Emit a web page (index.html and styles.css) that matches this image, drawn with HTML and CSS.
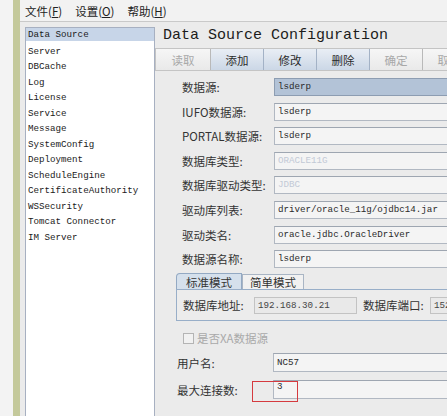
FILE: index.html
```html
<!DOCTYPE html>
<html lang="zh">
<head>
<meta charset="utf-8">
<title>Data Source Configuration</title>
<link rel="stylesheet" href="styles.css">
</head>
<body>
<div class="app">
  <div class="edge"></div>
  <div class="stripe"></div>
  <div class="main">
    <div class="menubar">
      <span class="menu">文件(<u>F</u>)</span>
      <span class="menu">设置(<u>O</u>)</span>
      <span class="menu">帮助(<u>H</u>)</span>
    </div>
    <div class="work">
      <ul class="nav">
        <li class="sel">Data Source</li>
        <li>Server</li>
        <li>DBCache</li>
        <li>Log</li>
        <li>License</li>
        <li>Service</li>
        <li>Message</li>
        <li>SystemConfig</li>
        <li>Deployment</li>
        <li>ScheduleEngine</li>
        <li>CertificateAuthority</li>
        <li>WSSecurity</li>
        <li>Tomcat Connector</li>
        <li>IM Server</li>
      </ul>
      <div class="panel">
        <div class="title">Data Source Configuration</div>
        <div class="toolbar">
          <span class="btn first off">读取</span>
          <span class="btn on">添加</span>
          <span class="btn on">修改</span>
          <span class="btn on">删除</span>
          <span class="btn off">确定</span>
          <span class="btn off">取消</span>
        </div>
        <div class="form">
          <span class="lbl">数据源:</span><span class="field focus">lsderp</span>
          <span class="lbl">IUFO数据源:</span><span class="field">lsderp</span>
          <span class="lbl">PORTAL数据源:</span><span class="field">lsderp</span>
          <span class="lbl">数据库类型:</span><span class="field dis">ORACLE11G</span>
          <span class="lbl">数据库驱动类型:</span><span class="field dis">JDBC</span>
          <span class="lbl">驱动库列表:</span><span class="field">driver/oracle_11g/ojdbc14.jar</span>
          <span class="lbl">驱动类名:</span><span class="field">oracle.jdbc.OracleDriver</span>
          <span class="lbl">数据源名称:</span><span class="field">lsderp</span>
        </div>
        <div class="tabs">
          <div class="tabbar">
            <span class="tab active">标准模式</span>
            <span class="tab">简单模式</span>
          </div>
          <div class="tabpanel">
            <span class="tlbl">数据库地址:</span>
            <span class="field addr">192.168.30.21</span>
            <span class="tlbl port">数据库端口:</span>
            <span class="field portf">1521</span>
          </div>
        </div>
        <div class="check">
          <span class="box"></span>
          <span class="checktext">是否XA数据源</span>
        </div>
        <div class="form2">
          <span class="lbl">用户名:</span><span class="field">NC57</span>
          <span class="lbl">最大连接数:</span><span class="field maxf">3<span class="mark"></span></span>
        </div>
      </div>
    </div>
  </div>
</div>
</body>
</html>
```

FILE: styles.css
```css
html, body {
  margin: 0;
  padding: 0;
  width: 447px;
  height: 416px;
  overflow: hidden;
  background: #ebebeb;
  font-family: "Noto Sans CJK SC", "DejaVu Sans", sans-serif;
  color: #333;
}

.app {
  display: flex;
  height: 416px;
}

.edge {
  width: 13px;
  background: #f3f3f3;
  flex: none;
}

.stripe {
  width: 7px;
  background: #c4c99b;
  flex: none;
}

.main {
  flex: 1;
  min-width: 0;
  display: flex;
  flex-direction: column;
  background: #ebebeb;
}

.menubar {
  height: 21px;
  flex: none;
  display: flex;
  align-items: center;
  gap: 13px;
  padding-left: 5px;
  background: #f2f2f2;
  border-bottom: 1px solid #c9c9c9;
  font-size: 11.5px;
  color: #222;
}

.menu u {
  text-decoration: underline;
  text-underline-offset: 1px;
}

.work {
  flex: 1;
  display: flex;
  min-height: 0;
}

.nav {
  list-style: none;
  margin: 5px 0 0 5px;
  padding: 0;
  width: 128px;
  flex: none;
  background: #ffffff;
  border: 1px solid #a7b0c1;
  border-bottom: none;
  font-family: "Liberation Mono", "DejaVu Sans Mono", monospace;
  font-size: 9.2px;
  color: #1a1a1a;
}

.nav li {
  height: 15.5px;
  line-height: 15.5px;
  padding-left: 2px;
  white-space: nowrap;
}

.nav li.sel {
  background: #c7d5e8;
  height: 13px;
  line-height: 14px;
  margin-bottom: 2.5px;
}

.panel {
  flex: 1;
  min-width: 0;
  display: flex;
  flex-direction: column;
  position: relative;
}

.title {
  height: 26px;
  line-height: 27px;
  padding-left: 8px;
  font-family: "Liberation Mono", "DejaVu Sans Mono", monospace;
  font-size: 15px;
  color: #1c1c1c;
  white-space: nowrap;
}

.toolbar {
  display: flex;
  height: 21px;
  border-top: 1px solid #c4c4c4;
  border-bottom: 1px solid #c4c4c4;
  margin-right: -40px;
}

.btn {
  width: 52px;
  flex: none;
  display: flex;
  align-items: center;
  justify-content: center;
  font-size: 11.5px;
  border-right: 1px solid #b9b9b9;
}

.btn.first {
  width: 54px;
  border-left: 1px solid #c4c4c4;
}

.btn.off {
  color: #a8a8a8;
  background: linear-gradient(#f6f6f6, #e9e9e9);
}

.btn.on {
  color: #2a2a2a;
  background: linear-gradient(#e9eef5, #cbd7e6);
  border-right-color: #a3b2c6;
}

.form {
  display: grid;
  grid-template-columns: 92px 1fr;
  row-gap: 6.6px;
  padding: 7px 0 0 27px;
  margin-right: -40px;
  align-items: center;
}

.lbl {
  font-size: 11.5px;
  color: #333;
  white-space: nowrap;
}

.field {
  height: 18px;
  box-sizing: border-box;
  border: 1px solid #b1b8c2;
  border-top-color: #9ea6b1;
  background: #f4f4f4;
  font-family: "Liberation Mono", "DejaVu Sans Mono", monospace;
  font-size: 9.2px;
  color: #2a2a2a;
  line-height: 16px;
  padding-left: 3px;
  white-space: nowrap;
}

.field.focus {
  background: #b3c3d7;
  border-color: #8d9db2;
}

.field.dis {
  color: #c2c9d6;
}

.tabs {
  margin: 5px -40px 0 21px;
}

.tabbar {
  display: flex;
  height: 16px;
}

.tab {
  width: 60px;
  display: flex;
  align-items: center;
  justify-content: center;
  font-size: 11.5px;
  color: #333;
  border: 1px solid #a9b5c4;
  border-bottom: none;
  background: #f1f1f1;
  margin-top: 1px;
}

.tab.active {
  width: 64px;
  margin-top: 0;
  background: #d5e0ec;
  border-color: #93a9c3;
  border-radius: 4px 0 0 0;
}

.tabpanel {
  height: 32px;
  box-sizing: border-box;
  display: flex;
  align-items: center;
  padding-left: 6px;
  border: 1px solid #98aec8;
  background: #ececec;
}

.tlbl {
  width: 71px;
  flex: none;
  font-size: 11.5px;
  color: #333;
  white-space: nowrap;
}

.tlbl.port {
  width: 67px;
  margin-left: 6px;
}

.field.addr {
  width: 103px;
  flex: none;
  height: 17px;
  background: #e9e9e9;
  border-color: #c3c3c3;
  color: #444;
}

.field.portf {
  width: 60px;
  flex: none;
  height: 17px;
  background: #e9e9e9;
  border-color: #c3c3c3;
  color: #444;
}

.check {
  display: flex;
  align-items: center;
  gap: 3px;
  margin: 11px 0 0 28px;
  height: 12px;
}

.box {
  width: 9px;
  height: 9px;
  border: 1px solid #b4b4b4;
  background: #f1f1f1;
}

.checktext {
  font-size: 11.5px;
  color: #a9a9a9;
}

.form2 {
  display: grid;
  grid-template-columns: 96px 1fr;
  row-gap: 8px;
  padding: 9px 0 0 22px;
  margin-right: -40px;
  align-items: center;
}

.form2 .field {
  height: 19px;
  line-height: 17px;
  position: relative;
}

.form2 .field.maxf {
  line-height: 12px;
}

.mark {
  position: absolute;
  left: -22px;
  top: 0;
  width: 44px;
  height: 19px;
  border: 1px solid #d53a3f;
}
```
